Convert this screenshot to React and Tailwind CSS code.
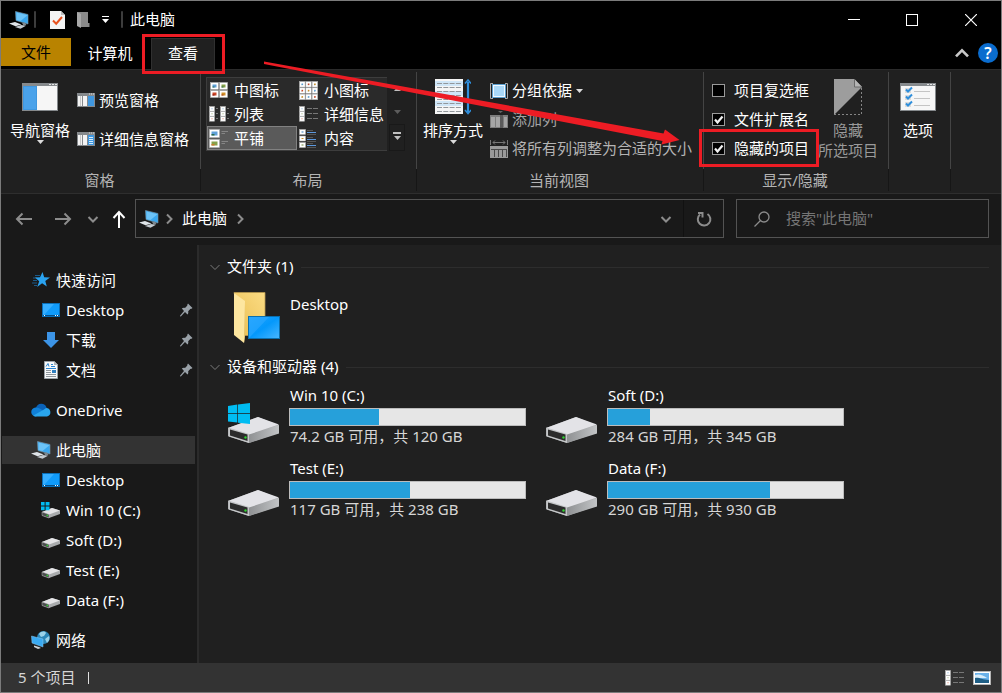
import React, { useState } from "react"

/* ---------- small glyphs ---------- */

const Caret = ({ className = "" }) => (
  <svg width="7" height="4" viewBox="0 0 7 4" className={className}>
    <path d="M0 0h7L3.500 4z" fill="currentColor" />
  </svg>
)

const Chevron = ({ dir = "down", size = 12, stroke = 1.5, className = "" }) => {
  const paths = {
    down: "M1.500 4l4.500 4.500L10.500 4",
    up: "M1.500 8.500L6 4l4.500 4.500",
    right: "M4 1.500L8.500 6 4 10.500",
  }
  return (
    <svg width={size} height={size} viewBox="0 0 12 12" className={`shrink-0 ${className}`}>
      <path d={paths[dir]} fill="none" stroke="currentColor" strokeWidth={stroke} />
    </svg>
  )
}

const Arrow = ({ dir }) => (
  <svg width="18" height="18" viewBox="0 0 18 18" fill="none" stroke="currentColor" strokeWidth="2">
    {dir === "left" && <path d="M17 9H2M7.500 3.500L2 9l5.500 5.500" />}
    {dir === "right" && <path d="M1 9h15M10.500 3.500L16 9l-5.500 5.500" />}
    {dir === "up" && <path d="M9 18V2M3.500 8L9 2l5.500 6" />}
  </svg>
)

/* ---------- object icons ---------- */

const PcIcon = () => (
  <svg width="20" height="18" viewBox="0 0 20 18" className="shrink-0">
    <path d="M6.500 0.500l12.500 3v9.500L7 9.500z" fill="#3aa7ee" stroke="#7d98a8" strokeWidth="0.6" />
    <path d="M7.500 1.500l11 2.700-7 5.800-4-1z" fill="#6cc3f7" />
    <path d="M13 12l3-0.500 1.500 2.500-3 0.500z" fill="#7d8890" />
    <path d="M0 12.500l6-1.500 6.500 2.500-6 1.800z" fill="#dfe4e8" />
    <path d="M6 16l6-2 5 0.800-5.500 3z" fill="#c3cad0" />
  </svg>
)

const CheckDocIcon = () => (
  <svg width="15" height="18" viewBox="0 0 15 18">
    <path d="M0 0h11l4 4v14H0z" fill="#f4f4f4" />
    <path d="M11 0v4h4z" fill="#bdbdbd" />
    <path d="M3 9.500l3.200 3.200L12 6" fill="none" stroke="#e8521e" strokeWidth="2" />
  </svg>
)

const GreyFolderIcon = () => (
  <svg width="13" height="16" viewBox="0 0 13 16">
    <path d="M0 0h11v11h1.500v4H4z" fill="#8a8a8a" />
    <path d="M0 0l4 2v14l-4-2z" fill="#a8a8a8" />
  </svg>
)

const StarIcon = () => (
  <svg width="20" height="18" viewBox="0 0 20 18">
    <path d="M4 4.500h5M2 7h4M2 9.500h4M1 12h5M3 14.500h3" stroke="#1a6aa6" strokeWidth="0.800" />
    <path
      d="M11.500 1l1.700 5.200 5.800.2-4.700 3.500 1.500 5.600-4.700-3.200-4.900 3.700 2-5.800L4 6.400l5-.2z"
      fill="#2aa3f0"
    />
  </svg>
)

const DesktopIcon = () => (
  <svg width="18" height="14" viewBox="0 0 18 14">
    <rect x="0.500" y="0.500" width="17" height="13" fill="#109bfb" stroke="#0a6fb8" />
    <path d="M1 1h11L2 12H1z" fill="#35adff" />
    <path d="M1 12.500h16" stroke="#064d84" />
    <path d="M2 12.500h1M13 12.500h1M15 12.500h1" stroke="#fff" />
  </svg>
)

const DownloadIcon = () => (
  <svg width="18" height="18" viewBox="0 0 18 18">
    <path d="M5 1h8v8h4l-8 8-8-8h4z" fill="#3c94e6" />
  </svg>
)

const DocIcon = () => (
  <svg width="18" height="18" viewBox="0 0 18 18">
    <path d="M2.500 0.500h10l3 3v14h-13z" fill="#f7f9fa" stroke="#9aa2a8" />
    <path d="M12 0.500v3.500h3.500z" fill="#aab2b8" />
    <path d="M4 5.500l2-3 1 3M9 3.500h2M9 5.500h4M4 7.500h10" fill="none" stroke="#2a84d0" />
    <path d="M4 9.500h5M4 11.500h5M4 13.500h10M4 15.500h10" stroke="#8f979d" />
    <path d="M10 9h4v3h-4z" fill="#2f7fc0" />
  </svg>
)

const CloudIcon = () => (
  <svg width="20" height="14" viewBox="0 0 20 14">
    <path d="M5 5a5.500 5.500 0 0 1 10.500-.5L16 6l-6 5-6-5z" fill="#0a62b8" />
    <path d="M4.500 4.500C8 4 11 7 13 8.500L5 13.500A4.500 4.500 0 0 1 4.500 4.500z" fill="#1080d8" />
    <path d="M15 5a4.300 4.300 0 0 1 1 8.500H4.500a4 4 0 0 1-2.500-.8L13 6.500z" fill="#2aa6ee" />
  </svg>
)

const NetworkIcon = () => (
  <svg width="20" height="18" viewBox="0 0 20 18">
    <circle cx="12.500" cy="6.500" r="6.500" fill="#2b86b8" />
    <path d="M8 3c2-3 6-3 7-1l-2 3-3 1zM14 8l4-3c1 3 0 5-2 7z" fill="#9ad2ea" />
    <path d="M0.500 5l11.500 3v8L1 12z" fill="#3aaaf2" stroke="#8cc9ee" strokeWidth="0.500" />
    <path d="M3 14.500l5 1.500 2 1-3 1-4-2z" fill="#ccd2d6" />
  </svg>
)

const PinIcon = () => (
  <svg width="13" height="14" viewBox="0 0 13 14" className="shrink-0">
    <path
      d="M8 0.500l4.500 4.500-1.500 1-0.500-.2L8.200 8.200c.3 1.500 0 2.500-.7 3.300L5 9l-4.200 4.500-.8-.3.200-.7L4 8 1.800 5.500c.8-.7 2-1 3.200-.6L7.400 2.600 7.200 2z"
      fill="#99a1a8"
    />
  </svg>
)

const WinLogo = ({ x = 0, y = 0, s = 1 }) => (
  <g transform={`translate(${x} ${y}) scale(${s})`} fill="#00bcf2">
    <path d="M0 3l9.300-1.400v8.700H0zM10 1.400L22 0v10.300H10zM0 11h9.300v8.400L0 18.400zM10 11H22V21l-12-1.300z" />
  </g>
)

const SmallDriveIcon = ({ system }) => (
  <svg width="20" height="18" viewBox="0 0 20 18">
    <path d="M1 11l10-4 8 2.500v3.500L8 17l-7-2.500z" fill="#a9abad" />
    <path d="M1 11l10-4 8 2.500L8 13.500z" fill="#e4e4e6" />
    <path d="M1 11l7 2.500V17l-7-2.500z" fill="#4a4c4e" stroke="#bbb" strokeWidth="0.500" />
    <path d="M5.500 14.500h1.500" stroke="#2fd22f" strokeWidth="1.500" />
    {system && (
      <path d="M0 1h3.600v3.600H0zM4.600 1h3.900v3.600H4.600zM0 5.600h3.600v3.600H0zM4.600 5.600h3.900v3.600H4.600z" fill="#00bcf2" />
    )}
  </svg>
)

const DriveIcon = ({ system }) => (
  <svg width="54" height="42" viewBox="0 0 54 42" className="shrink-0">
    <defs>
      <linearGradient id="driveSide" x1="0" x2="1">
        <stop offset="0" stopColor="#8f9193" />
        <stop offset="1" stopColor="#c2c4c6" />
      </linearGradient>
    </defs>
    <path d="M1 26L31 15l21 8.500v7L22 41 1 34z" fill="#a7a9ab" />
    <path d="M22 32l30-9v8.500L22 41z" fill="url(#driveSide)" />
    <path d="M1 26l30-11 21 7.500L22 32.500z" fill="#e3e3e7" />
    <path d="M1.500 25.500L22 32v9L1.500 34.500z" fill="#c4c6c8" />
    <path d="M3 27.500l17.500 5v6.500L3 33.500z" fill="#2c2c2c" />
    <circle cx="18.500" cy="35.500" r="1.200" fill="#2fd22f" />
    {system && <WinLogo x={1} y={1} />}
  </svg>
)

const FolderIcon = () => (
  <svg width="48" height="52" viewBox="0 0 48 52" className="shrink-0">
    <defs>
      <linearGradient id="folderBack" x1="0" x2="1" y1="1" y2="0">
        <stop offset="0" stopColor="#e9bd50" />
        <stop offset="1" stopColor="#fbdc84" />
      </linearGradient>
      <linearGradient id="folderScreen" x1="0" x2="1" y2="1">
        <stop offset="0" stopColor="#22a5ff" />
        <stop offset="0.500" stopColor="#0498fb" />
        <stop offset="1" stopColor="#48b6ff" />
      </linearGradient>
    </defs>
    <path d="M1 0.500h31v43H11z" fill="url(#folderBack)" stroke="#b8984e" strokeWidth="0.800" />
    <path d="M1 1l11 8v34l-1 8L1 43z" fill="#fde6a0" />
    <path d="M12 9v34l-1 8V43z" fill="#e5c36c" />
    <rect x="15.500" y="24.500" width="31" height="22" fill="url(#folderScreen)" stroke="#0b6fae" />
    <path d="M16 46L36 25H16z" fill="#2fa9ff" opacity="0.600" />
  </svg>
)

/* ---------- ribbon icons ---------- */

const WindowFrame = ({ children }) => (
  <svg width="36" height="28" viewBox="0 0 36 28">
    <rect width="36" height="28" fill="#85898c" />
    <path d="M1 3h34v24H1z" fill="#f6f6f6" />
    <path d="M27 1h2v1h-2zM30 1h2v1h-2zM33 1h2v1h-2z" fill="#e5e5e5" />
    {children}
  </svg>
)

const NavPaneIcon = () => (
  <WindowFrame>
    <path d="M1 3h14v24H1z" fill="#3f97df" />
    <path d="M2 4h12v22H2z" fill="#4aa2ea" />
  </WindowFrame>
)

const OptionsIcon = () => (
  <WindowFrame>
    <path d="M5 5h6v5H5zM5 12h6v5H5zM5 19h6v5H5z" fill="#dcdcdc" />
    <path
      d="M6 6.500l2 2 4-4M6 13.500l2 2 4-4M6 20.500l2 2 4-4"
      fill="none"
      stroke="#2f8fdc"
      strokeWidth="2"
    />
    <path d="M14 8.500h16M14 15.500h16M14 22.500h16" stroke="#c4c4c4" />
  </WindowFrame>
)

const PaneIcon = ({ lines }) => (
  <svg width="18" height="14" viewBox="0 0 18 14" className="shrink-0">
    <rect width="18" height="14" fill="#85898c" />
    <path d="M1 3h4v10H1zM6 3h4v10H6z" fill="#f3f3f3" />
    <path d="M3 3h1v10H3z" fill="#c9c9c9" />
    <path d="M11 3h6v10h-6z" fill="#3f97df" />
    <path d="M12 1h1M14 1h1M16 1h1" stroke="#ddd" />
    {lines && <path d="M12 5.500h4M12 7.500h4M12 9.500h4M12 11.500h4" stroke="#d5ebfb" />}
  </svg>
)

// one framed thumbnail: white mount, coloured picture, dark strip at the foot
const Thumb = ({ x, y, w, h, color, ground = "#2c6b4a" }) => (
  <g>
    <rect x={x} y={y} width={w} height={h} fill="#fff" stroke="#b0b0b0" strokeWidth="0.600" />
    <rect x={x + 2} y={y + 2} width={w - 4} height={h - 4} fill={color} />
    <rect x={x + 2} y={y + h / 2 + 0.5} width={(w - 4) / 2} height={h / 2 - 2.5 > 0 ? h / 2 - 2.5 : 0} fill={ground} />
  </g>
)

const MediumIcon = () => (
  <svg width="18" height="16" viewBox="0 0 18 16">
    <Thumb x={0.5} y={0.5} w={8} h={7} color="#5f9fd8" />
    <Thumb x={9.5} y={0.5} w={8} h={7} color="#86a14a" />
    <Thumb x={0.5} y={8.5} w={8} h={7} color="#cc4526" ground="#7d1710" />
    <Thumb x={9.5} y={8.5} w={8} h={7} color="#cf9028" ground="#a33c1c" />
  </svg>
)

const SmallGridIcon = () => {
  const colors = ["#5f9fd8", "#cc4526", "#cf9028"]
  return (
    <svg width="19" height="19" viewBox="0 0 19 19">
      {[0, 1, 2].map(r =>
        [0, 1, 2].map(c => (
          <Thumb
            key={`${r}-${c}`}
            x={0.5 + c * 6.3}
            y={0.5 + r * 6.3}
            w={5.6}
            h={5.6}
            color={colors[(r + c) % 3]}
          />
        ))
      )}
    </svg>
  )
}

const ListIcon = () => (
  <svg width="20" height="16" viewBox="0 0 20 16">
    {[0, 11].map(x => (
      <g key={x}>
        <Thumb x={x + 0.5} y={0.5} w={5} h={4.7} color="#3b7fc0" />
        <Thumb x={x + 0.5} y={5.5} w={5} h={4.7} color="#6d8a3a" />
        <Thumb x={x + 0.5} y={10.5} w={5} h={4.7} color="#cc4526" />
        <path d={`M${x + 7} 2.500h2M${x + 7} 7.500h2M${x + 7} 12.500h2`} stroke="#777" />
      </g>
    ))}
  </svg>
)

const DetailsIcon = () => (
  <svg width="19" height="16" viewBox="0 0 19 16">
    <Thumb x={0.5} y={0.5} w={5} h={4.7} color="#3b7fc0" />
    <Thumb x={0.5} y={5.5} w={5} h={4.7} color="#6d8a3a" />
    <Thumb x={0.5} y={10.5} w={5} h={4.7} color="#cc4526" />
    <path d="M8 2.500h5M14 2.500h5M8 7.500h5M14 7.500h5M8 12.500h5M14 12.500h5" stroke="#777" />
  </svg>
)

const TilesIcon = () => (
  <svg width="19" height="19" viewBox="0 0 19 19">
    <Thumb x={0.5} y={0.5} w={10} h={8} color="#5f9fd8" />
    <Thumb x={0.5} y={10.5} w={10} h={8} color="#86a14a" ground="#c9772c" />
    <path d="M12.500 2.500H19M12.500 4.500H16M12.500 12.500H19M12.500 14.500H16" stroke="#858585" />
  </svg>
)

const ContentIcon = () => (
  <svg width="19" height="19" viewBox="0 0 19 19">
    <Thumb x={0.5} y={0.5} w={6} h={5} color="#3b7fc0" />
    <Thumb x={0.5} y={7} w={6} h={5} color="#cf9028" />
    <Thumb x={0.5} y={13.5} w={6} h={5} color="#6d8a3a" />
    <path d="M8 3.500h9M8 10.500h9M8 16.500h9" stroke="#5c98dd" />
    <path d="M8 1.500h6M8 8.500h6M8 14.500h6M8 5.500h9M8 12.500h9M8 18.500h9" stroke="#555" />
  </svg>
)

const SortIcon = () => (
  <svg width="36" height="36" viewBox="0 0 36 36">
    <path d="M0 0h28v35H0z" fill="#f5f5f5" />
    <path d="M0 2h28v5H0zM0 12h28v5H0zM0 22h28v5H0z" fill="#cfe6f7" />
    <path
      d="M2 4.500h24M2 8.500h24M2 12.500h24M2 16.500h24M2 20.500h24M2 24.500h24M2 28.500h24M2 32.500h24"
      stroke="#92979b"
      strokeDasharray="5 1.300"
    />
    <path d="M33 3v30" stroke="#2f8fdc" strokeWidth="2.200" />
    <path d="M30 4.500L33 1l3 3.500M30 31l3 3.500 3-3.500" fill="none" stroke="#2f8fdc" strokeWidth="1.500" />
  </svg>
)

const GroupByIcon = () => (
  <svg width="18" height="16" viewBox="0 0 18 16">
    <rect x="3.500" y="2.500" width="11" height="11" fill="#a9d8f8" stroke="#f0f8ff" />
    <rect x="2.500" y="1.500" width="13" height="13" fill="none" stroke="#5b9fce" />
    <path d="M3 0.500H0.500v15H3M15 0.500h2.500v15H15" fill="none" stroke="#a9a9a9" />
  </svg>
)

const AddColumnIcon = () => (
  <svg width="18" height="18" viewBox="0 0 18 18">
    <path d="M8 0h5l-2.500 2z" fill="#666" />
    <path d="M0 4h18v13H0z" fill="#7d7d7d" />
    <path d="M1 6h4v10H1zM6 6h4v10H6zM14 6h3v10h-3z" fill="#a5a5a5" />
    <path d="M10 4h3v13h-3z" fill="#5a5a5a" />
  </svg>
)

const FitColumnsIcon = () => (
  <svg width="18" height="18" viewBox="0 0 18 18">
    <path d="M0.500 0v5M17.500 0v5M3 2.500h12M5 0.500l-2 2 2 2M13 0.500l2 2-2 2" fill="none" stroke="#777" />
    <path d="M0 6h18v12H0z" fill="#9a9a9a" />
    <path d="M1 9.500h16M4.500 10v7M8.500 10v7M12.500 10v7M16.500 10v7" stroke="#4a4a4a" />
  </svg>
)

const HideIcon = () => (
  <svg width="28" height="36" viewBox="0 0 28 36">
    <path d="M0 0h20l8 8L0 36z" fill="#9d9d9d" />
    <path d="M20.500 0v8H28" fill="#b5b5b5" stroke="#6a6a6a" />
    <path d="M27.500 9v26.500H0" fill="none" stroke="#858585" strokeDasharray="2 2" />
  </svg>
)

/* ---------- window chrome ---------- */

const TitleBar = () => (
  <header className="flex h-[37px] items-center bg-black">
    <div className="flex flex-1 items-center pl-2">
      <PcIcon />
      <span className="ml-[5px] h-[17px] w-0.5 rounded-sm bg-[#3c3c3c]" />
      <button className="ml-[14px]" aria-label="属性"><CheckDocIcon /></button>
      <button className="ml-3" aria-label="新建文件夹"><GreyFolderIcon /></button>
      <button className="ml-3 flex flex-col items-center gap-0.5 text-white" aria-label="自定义快速访问工具栏">
        <span className="h-px w-[7px] bg-white" />
        <Caret />
      </button>
      <span className="mr-[7px] ml-3 h-[17px] w-0.5 rounded-sm bg-[#3c3c3c]" />
      <h1 className="pb-0.5 text-white">此电脑</h1>
    </div>
    <div className="flex h-full text-white">
      <button className="flex w-[58px] items-center justify-center" aria-label="最小化">
        <span className="h-px w-3 bg-white" />
      </button>
      <button className="flex w-[58px] items-center justify-center" aria-label="最大化">
        <span className="size-3 border border-white" />
      </button>
      <button className="flex w-[60px] items-center justify-center" aria-label="关闭">
        <svg width="12" height="12" viewBox="0 0 12 12">
          <path d="M0 0l12 12M12 0L0 12" stroke="#fff" strokeWidth="1.200" />
        </svg>
      </button>
    </div>
  </header>
)

const TabStrip = () => (
  <nav className="flex h-8 items-start border-b border-[#2b2b2b] bg-black text-white">
    <button className="h-7 w-[70px] bg-[#b98300] text-black">文件</button>
    <button className="h-[31px] w-20 pr-0.5 pb-0.5">计算机</button>
    <div className="relative">
      <button className="h-8 w-16 border-x border-t border-[#303030] bg-[#202020] pb-1">查看</button>
      <span className="pointer-events-none absolute -top-1 -right-[10px] -bottom-1 -left-[9px] z-10 border-3 border-[#ed1c24]" />
    </div>
    <div className="ml-auto flex h-[30px] items-center gap-2 pr-[3px] text-[#c8c8c8]">
      <button aria-label="折叠功能区"><Chevron dir="up" size={16} stroke={2} /></button>
      <button
        className="size-5 rounded-full bg-[#0a6cce] text-base leading-5 font-semibold text-white"
        aria-label="帮助"
      >
        ?
      </button>
    </div>
  </nav>
)

/* ---------- ribbon ---------- */

const RibbonGroup = ({ label, className, children }) => (
  <section className={`flex shrink-0 flex-col ${className}`}>
    <div className="mt-0.5 h-[97px] border-r border-[#444444]">{children}</div>
    <div className="flex h-[22px] items-center justify-center border-r border-[#161616] pr-0.5 text-[#b4b4b4]">
      {label}
    </div>
  </section>
)

const BigButton = ({ icon, label, caret, className = "" }) => (
  <button className={`flex flex-col items-center ${className}`}>
    <span className="flex items-start">{icon}</span>
    <span className="whitespace-pre-line">{label}</span>
    {caret && <Caret className="text-[#dcdcdc]" />}
  </button>
)

const views = [
  { label: "中图标", icon: <MediumIcon /> },
  { label: "小图标", icon: <SmallGridIcon /> },
  { label: "列表", icon: <ListIcon /> },
  { label: "详细信息", icon: <DetailsIcon /> },
  { label: "平铺", icon: <TilesIcon /> },
  { label: "内容", icon: <ContentIcon /> },
]

const LayoutGallery = () => {
  const [view, setView] = useState("平铺")
  return (
    <div className="flex pt-[5px] pl-[5px]">
      <div className="grid grid-cols-2 border border-r-0 border-[#3d3d3d] bg-[#2a2a2a]">
        {views.map(v => (
          <button
            key={v.label}
            onClick={() => setView(v.label)}
            className={`flex h-6 w-[90px] items-center gap-[5px] border whitespace-nowrap ${
              view === v.label ? "border-[#818181] bg-[#5a5a5a]" : "border-transparent"
            }`}
          >
            <span className="flex w-[21px] shrink-0 justify-center">{v.icon}</span>
            {v.label}
          </button>
        ))}
      </div>
      <div className="ml-0.5 flex w-4 flex-col text-[#c0c0c0]">
        <button className="flex h-6 flex-1 items-center justify-center" aria-label="上一行">
          <Caret className="rotate-180" />
        </button>
        <button className="flex h-6 flex-1 items-center justify-center text-[#5c5c5c]" aria-label="下一行">
          <Caret />
        </button>
        <button
          className="flex h-6 flex-1 flex-col items-center justify-center gap-0.5 border border-[#191919] pb-0.5"
          aria-label="更多"
        >
          <span className="h-0.5 w-2 bg-[#c0c0c0]" />
          <Caret />
        </button>
      </div>
    </div>
  )
}

const RibbonCheck = ({ label, defaultChecked, highlighted }) => (
  <label className="relative flex h-[29px] items-center gap-[9px] whitespace-nowrap">
    <span className="relative flex size-[13px]">
      <input
        type="checkbox"
        defaultChecked={defaultChecked}
        className="peer size-[13px] appearance-none border border-[#9b9b9b] bg-black"
      />
      <svg
        viewBox="0 0 13 13"
        className="pointer-events-none absolute inset-0 size-[13px] opacity-0 peer-checked:opacity-100"
      >
        <path d="M3 6.500l2.500 3L10.500 3.500" fill="none" stroke="#f0f0f0" strokeWidth="2.200" />
      </svg>
    </span>
    <span className="pb-0.5">{label}</span>
    {highlighted && (
      <span className="pointer-events-none absolute -top-[5px] -right-[10px] -bottom-1 -left-[13px] z-10 border-3 border-[#ed1c24]" />
    )}
  </label>
)

const RibbonRow = ({ icon, label, caret, disabled, className = "" }) => (
  <button disabled={disabled} className={`flex h-[29px] items-center gap-1 whitespace-nowrap ${className}`}>
    {icon}
    <span className="pb-0.5">{label}</span>
    {caret && <Caret className="text-[#dcdcdc]" />}
  </button>
)

const Ribbon = () => (
  <div className="flex border-b border-[#2e2e2e] bg-[#202020] pb-0.5 text-white">
    <RibbonGroup label="窗格" className="w-[200px]">
      <div className="flex pl-[9px]">
        <BigButton icon={<NavPaneIcon />} label="导航窗格" caret className="pt-[11px] [&>span:first-child]:h-[37px]" />
        <div className="flex flex-col gap-[19px] pt-[18px] pl-[7px]">
          <button className="flex h-5 items-center gap-1"><PaneIcon />预览窗格</button>
          <button className="flex h-5 items-center gap-1"><PaneIcon lines />详细信息窗格</button>
        </div>
      </div>
    </RibbonGroup>

    <RibbonGroup label="布局" className="w-[216px]">
      <LayoutGallery />
    </RibbonGroup>

    <RibbonGroup label="当前视图" className="w-[287px]">
      <div className="flex pl-[6px]">
        <BigButton icon={<SortIcon />} label="排序方式" caret className="pt-[7px] [&>span:first-child]:h-[41px]" />
        <div className="flex flex-col pt-1 pl-[7px]">
          <RibbonRow icon={<GroupByIcon />} label="分组依据" caret />
          <RibbonRow icon={<AddColumnIcon />} label="添加列" disabled className="text-[#a3a3a3]" />
          <RibbonRow
            icon={<FitColumnsIcon />}
            label="将所有列调整为合适的大小"
            disabled
            className="text-[#b4b4b4]"
          />
        </div>
      </div>
    </RibbonGroup>

    <RibbonGroup label="显示/隐藏" className="w-[185px]">
      <div className="flex pl-2">
        <div className="flex flex-col pt-1">
          <RibbonCheck label="项目复选框" />
          <RibbonCheck label="文件扩展名" defaultChecked />
          <RibbonCheck label="隐藏的项目" defaultChecked highlighted />
        </div>
        <BigButton
          icon={<HideIcon />}
          label={"隐藏\n所选项目"}
          className="pt-[7px] pl-[9px] whitespace-nowrap text-[#9a9a9a] [&>span:first-child]:h-[41px]"
        />
      </div>
    </RibbonGroup>

    <RibbonGroup className="w-[62px]">
      <BigButton icon={<OptionsIcon />} label="选项" className="ml-[11px] pt-[11px] [&>span:first-child]:h-[37px]" />
    </RibbonGroup>
  </div>
)

/* ---------- address row ---------- */

const AddressRow = () => (
  <div className="flex items-center bg-[#191919] pt-[5px] pr-3 pb-[7px] pl-[14px] text-[#8c8c8c]">
    <button aria-label="后退"><Arrow dir="left" /></button>
    <button className="ml-[21px]" aria-label="前进"><Arrow dir="right" /></button>
    <button className="ml-[15px]" aria-label="最近浏览的位置"><Chevron stroke={2} /></button>
    <button className="mr-[7px] ml-[11px] text-white" aria-label="上移"><Arrow dir="up" /></button>
    <div className="flex h-[39px] flex-1 items-center border border-[#535353] pl-[3px]">
      <PcIcon />
      <Chevron dir="right" stroke={2} className="ml-1" />
      <button className="mx-[7px] pb-0.5 text-white">此电脑</button>
      <Chevron dir="right" stroke={2} />
      <button className="mr-[11px] ml-auto" aria-label="历史记录"><Chevron stroke={2} /></button>
      <button
        className="flex h-full w-10 items-center justify-center border-l border-[#111111]"
        aria-label="刷新"
      >
        <svg width="16" height="16" viewBox="0 0 16 16" fill="none" stroke="#8c8c8c" strokeWidth="2">
          <path d="M11.500 3A6.300 6.300 0 1 1 4 3.500" />
          <path d="M2 2h4.500v4.500" />
        </svg>
      </button>
    </div>
    <label className="ml-3 flex h-[39px] w-[253px] items-center border border-[#535353] pl-[17px]">
      <svg
        width="16"
        height="16"
        viewBox="0 0 16 16"
        fill="none"
        stroke="#8c8c8c"
        strokeWidth="1.300"
        className="shrink-0"
      >
        <circle cx="10" cy="6" r="5" />
        <path d="M6.500 9.500L0.500 15.500" />
      </svg>
      <input
        type="search"
        aria-label="搜索"
        placeholder={'搜索"此电脑"'}
        className="ml-4 w-full min-w-0 bg-transparent pb-0.5 text-white outline-none placeholder:text-[#757575]"
      />
    </label>
  </div>
)

/* ---------- navigation pane ---------- */

const navGroups = [
  [
    { label: "快速访问", icon: <StarIcon />, root: true },
    { label: "Desktop", icon: <DesktopIcon />, pinned: true },
    { label: "下载", icon: <DownloadIcon />, pinned: true },
    { label: "文档", icon: <DocIcon />, pinned: true },
  ],
  [{ label: "OneDrive", icon: <CloudIcon />, root: true }],
  [
    { label: "此电脑", icon: <PcIcon />, root: true, active: true },
    { label: "Desktop", icon: <DesktopIcon /> },
    { label: "Win 10 (C:)", icon: <SmallDriveIcon system /> },
    { label: "Soft (D:)", icon: <SmallDriveIcon /> },
    { label: "Test (E:)", icon: <SmallDriveIcon /> },
    { label: "Data (F:)", icon: <SmallDriveIcon /> },
  ],
  [{ label: "网络", icon: <NetworkIcon />, root: true }],
]

const NavPane = () => (
  <aside className="flex w-[196px] shrink-0 flex-col gap-[10px] pt-[21px] pr-0.5 pl-px">
    {navGroups.map((group, i) => (
      <ul key={i}>
        {group.map(item => (
          <li key={item.label} className="mb-0.5">
            <button
              className={`flex h-7 w-full items-center gap-[5px] pr-0.5 ${
                item.root ? "pl-[29px]" : "pl-[39px]"
              } ${item.active ? "bg-[#333333]" : ""}`}
            >
              <span className="flex w-5 shrink-0 justify-center">{item.icon}</span>
              {item.label}
              {item.pinned && <span className="ml-auto"><PinIcon /></span>}
            </button>
          </li>
        ))}
      </ul>
    ))}
  </aside>
)

/* ---------- file area ---------- */

const drives = [
  { name: "Win 10 (C:)", info: "74.2 GB 可用，共 120 GB", used: 38, system: true },
  { name: "Soft (D:)", info: "284 GB 可用，共 345 GB", used: 18 },
  { name: "Test (E:)", info: "117 GB 可用，共 238 GB", used: 51 },
  { name: "Data (F:)", info: "290 GB 可用，共 930 GB", used: 69 },
]

const SectionHeader = ({ children }) => (
  <div className="flex h-5 items-center">
    <Chevron stroke={1} className="text-[#7a7a7a]" />
    <h2 className="mr-2 ml-[6px] pb-0.5">{children}</h2>
    <span className="h-px flex-1 bg-[#2d2d2d]" />
  </div>
)

const Drive = ({ drive }) => (
  <div className="flex h-[73px] w-[318px] items-start">
    <div className="pt-[25px]"><DriveIcon system={drive.system} /></div>
    <div className="ml-2 flex flex-col pt-2">
      <span className="pl-px">{drive.name}</span>
      <div
        role="progressbar"
        aria-label={drive.name}
        aria-valuenow={drive.used}
        className="mt-[3px] h-[18px] w-[237px] border border-[#bcbcbc] bg-[#e6e6e6]"
      >
        <div className="h-full bg-[#26a0da]" style={{ width: `${drive.used}%` }} />
      </div>
      <span className="pl-px text-[#d6d6d6]">{drive.info}</span>
    </div>
  </div>
)

const FileArea = () => (
  <main className="flex-1 border-l-2 border-[#2b2b2b] bg-[#202020] pt-3 pr-3 pl-[10px]">
    <SectionHeader>文件夹 (1)</SectionHeader>
    <div className="flex h-20 items-start pt-[15px] pl-6">
      <FolderIcon />
      <span className="pt-0.5 pl-[9px]">Desktop</span>
    </div>
    <SectionHeader>设备和驱动器 (4)</SectionHeader>
    <div className="flex flex-wrap pl-[18px]">
      {drives.map(d => <Drive key={d.name} drive={d} />)}
    </div>
  </main>
)

const StatusBar = () => (
  <footer className="flex h-[29px] items-center bg-[#333333] pr-[10px] pl-[17px] text-[#d6d6d6]">
    <span className="pb-0.5">5 个项目</span>
    <span className="ml-[13px] h-3 w-px bg-[#e0e0e0]" />
    <div className="ml-auto flex items-center gap-[9px]">
      <button aria-label="详细信息"><DetailsIcon /></button>
      <button aria-label="大图标">
        <svg width="18" height="14" viewBox="0 0 18 14">
          <rect x="0.500" y="0.500" width="17" height="13" fill="#fff" stroke="#b5b5b5" />
          <path d="M2 2h14v10H2z" fill="#69b1ea" />
          <path d="M2 4c4-1.500 8 0 12 3H2z" fill="#d8edfa" />
          <path d="M2 7c4-1 7 2 14 2v3H2z" fill="#1f5f86" />
        </svg>
      </button>
    </div>
  </footer>
)

const App = () => (
  <div className="relative flex min-h-screen flex-col overflow-hidden border border-[#7b7b7b] bg-[#191919] font-['Noto_Sans','Noto_Sans_CJK_SC',sans-serif] text-[15px] leading-5 text-white">
    <TitleBar />
    <TabStrip />
    <Ribbon />
    <AddressRow />
    <div className="flex flex-1">
      <NavPane />
      <FileArea />
    </div>
    <StatusBar />

    {/* pointer from the tab to the checkbox */}
    <svg
      width="418"
      height="86"
      viewBox="0 0 418 86"
      className="pointer-events-none absolute top-[60px] left-[262px] z-20"
    >
      <path d="M1 0.500L400.500 72.500 402 68.500 416.500 79 398.500 83.500 399.500 80 1 3z" fill="#ed1c24" />
    </svg>
  </div>
)

export default App
